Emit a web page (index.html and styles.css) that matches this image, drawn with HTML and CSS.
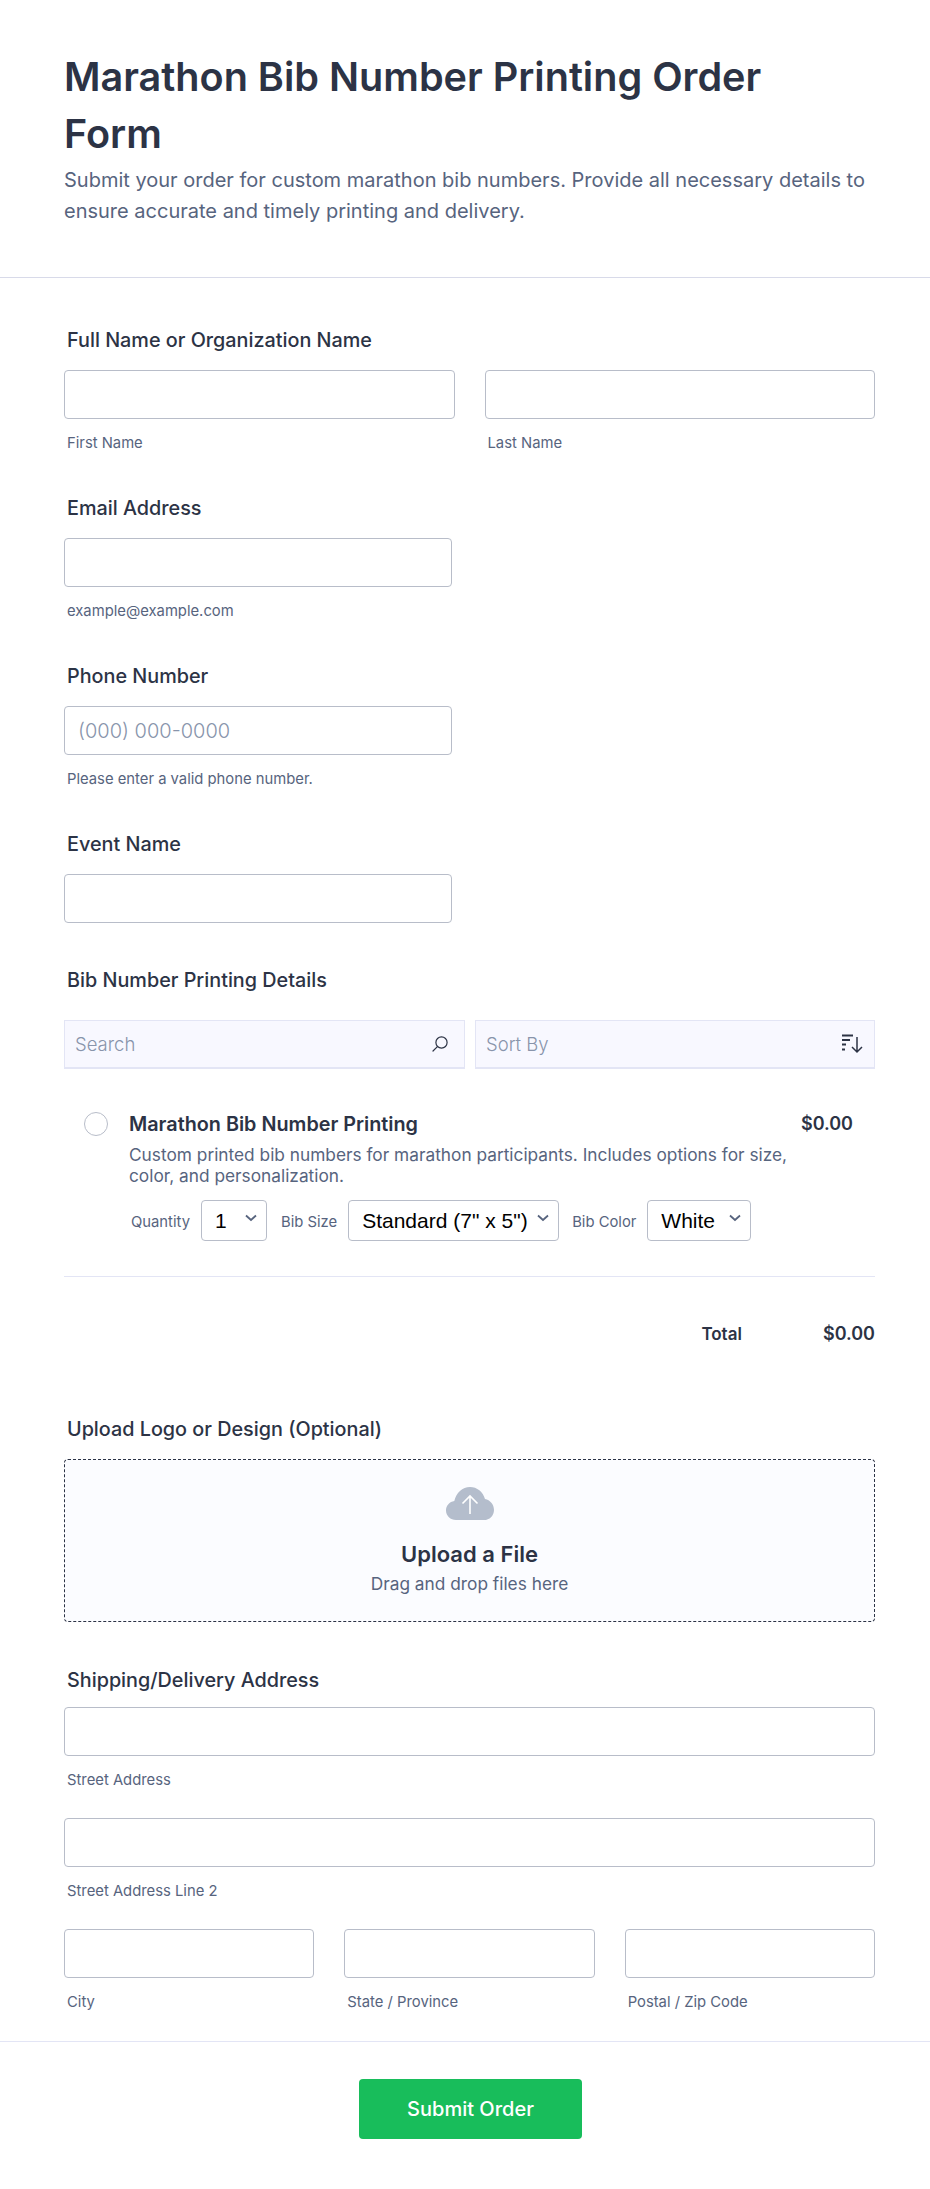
FILE: index.html
```html
<!DOCTYPE html>
<html>
<head>
	<meta charset="utf-8">
	<meta name="viewport" content="width=device-width, initial-scale=1.0">
	<title>Marathon Bib Number Printing Order Form</title>
	<link rel="stylesheet" href="styles.css">
</head>
<body>
	<header class="form-header">
		<h1>Marathon Bib Number Printing Order Form</h1>
		<p>Submit your order for custom marathon bib numbers. Provide all necessary details to ensure accurate and timely printing and delivery.</p>
	</header>

	<form class="form-body">
		<div class="field first">
			<label class="field-label">Full Name or Organization Name</label>
			<div class="cols cols-2">
				<div>
					<input type="text" class="text-input">
					<span class="sublabel">First Name</span>
				</div>
				<div>
					<input type="text" class="text-input">
					<span class="sublabel">Last Name</span>
				</div>
			</div>
		</div>

		<div class="field">
			<label class="field-label">Email Address</label>
			<input type="text" class="text-input half">
			<span class="sublabel">example@example.com</span>
		</div>

		<div class="field">
			<label class="field-label">Phone Number</label>
			<input type="text" class="text-input half" placeholder="(000) 000-0000">
			<span class="sublabel">Please enter a valid phone number.</span>
		</div>

		<div class="field">
			<label class="field-label">Event Name</label>
			<input type="text" class="text-input half">
		</div>

		<div class="field products">
			<label class="field-label">Bib Number Printing Details</label>
			<div class="product-tools">
				<div class="tool search-tool">
					<span>Search</span>
					<svg width="20" height="20" viewBox="0 0 20 20" fill="none" stroke="#2c3345" stroke-width="1.2">
						<circle cx="11.5" cy="8.5" r="5.6"/>
						<path d="M7.4 12.6 3 17" stroke-linecap="round"/>
					</svg>
				</div>
				<div class="tool">
					<span>Sort By</span>
					<svg width="22" height="20" viewBox="0 0 22 20" fill="none" stroke="#2c3345" stroke-width="2">
						<path d="M1 1.500h11M1 6h8M1 10.500h4M1 15.500h3"/>
						<path d="M16 3v15M11 13l5 5 5-5" stroke-width="1.500"/>
					</svg>
				</div>
			</div>

			<div class="product">
				<span class="radio"></span>
				<div class="product-name">Marathon Bib Number Printing</div>
				<div class="product-price">$0.00</div>
				<div class="product-desc">Custom printed bib numbers for marathon participants. Includes options for size, color, and personalization.</div>
				<div class="product-options">
					<span class="opt-label">Quantity</span>
					<div class="select-box qty">
						<select><option>1</option></select>
						<svg class="chevron" width="12" height="8" viewBox="0 0 12 8" fill="none" stroke="#57647e" stroke-width="1.8"><path d="M1 1.500l5 4.500 5-4.500"/></svg>
					</div>
					<span class="opt-label">Bib Size</span>
					<div class="select-box size">
						<select><option>Standard (7" x 5")</option></select>
						<svg class="chevron" width="12" height="8" viewBox="0 0 12 8" fill="none" stroke="#57647e" stroke-width="1.8"><path d="M1 1.500l5 4.500 5-4.500"/></svg>
					</div>
					<span class="opt-label">Bib Color</span>
					<div class="select-box color">
						<select><option>White</option></select>
						<svg class="chevron" width="12" height="8" viewBox="0 0 12 8" fill="none" stroke="#57647e" stroke-width="1.8"><path d="M1 1.500l5 4.500 5-4.500"/></svg>
					</div>
				</div>
			</div>

			<div class="total-row">
				<span class="total-label">Total</span>
				<span class="total-value">$0.00</span>
			</div>
		</div>

		<div class="field upload-field">
			<label class="field-label">Upload Logo or Design (Optional)</label>
			<div class="upload-box">
				<svg width="48" height="33" viewBox="0 0 48 33">
					<path fill="#b4bdcc" d="M10 33C4.500 33 0 28.800 0 23.500 0 18.700 3.600 14.700 8.300 14.100 10 6 16.500 0 24 0c7 0 13 4.900 15 11.900 5 .8 9 5.500 9 11 0 5.600-4.500 10.100-10 10.100Z"/>
					<path fill="none" stroke="#fff" stroke-width="1.600" d="M24 27V9M16.500 16.500 24 9l7.500 7.500"/>
				</svg>
				<div class="upload-title">Upload a File</div>
				<div class="upload-sub">Drag and drop files here</div>
			</div>
		</div>

		<div class="field address">
			<label class="field-label">Shipping/Delivery Address</label>
			<input type="text" class="text-input">
			<span class="sublabel">Street Address</span>
			<input type="text" class="text-input addr-line">
			<span class="sublabel">Street Address Line 2</span>
			<div class="cols cols-3">
				<div>
					<input type="text" class="text-input">
					<span class="sublabel">City</span>
				</div>
				<div>
					<input type="text" class="text-input">
					<span class="sublabel">State / Province</span>
				</div>
				<div>
					<input type="text" class="text-input">
					<span class="sublabel">Postal / Zip Code</span>
				</div>
			</div>
		</div>
	</form>

	<footer class="form-footer">
		<button type="button" class="submit-btn">Submit Order</button>
	</footer>
</body>
</html>
```

FILE: styles.css
```css
* {
	padding: 0;
	margin: 0;
	box-sizing: border-box;
}
body {
	background: #fff;
	font-family: Inter, "Liberation Sans", sans-serif;
	color: #2c3345;
}
.form-header {
	padding: 49px 55px 50px 64px;
	border-bottom: 1px solid #d8dae9;
}
.form-header h1 {
	max-width: 790px;
	font-size: 39.6px;
	line-height: 57px;
	font-weight: 600;
}
.form-header p {
	font-size: 20px;
	line-height: 31px;
	color: #57647e;
	margin-top: 2px;
}
.form-body {
	padding: 0 55px 0 64px;
}
.field {
	padding-top: 43px;
}
.field.first {
	padding-top: 50px;
}
.field-label {
	display: block;
	font-size: 19.8px;
	line-height: 24px;
	font-weight: 500;
	padding-left: 3px;
	margin-bottom: 18px;
}
.sublabel {
	display: block;
	font-size: 14.8px;
	line-height: 20px;
	color: #57647e;
	padding-left: 3px;
	margin-top: 14px;
}
.text-input {
	display: block;
	width: 100%;
	height: 49px;
	padding: 0 13px;
	font-family: inherit;
	font-size: 20px;
	font-weight: 300;
	border: 1px solid #b8bdc9;
	border-radius: 4px;
	background: #fff;
}
.text-input::placeholder {
	color: #8894ab;
}
.text-input.half {
	width: 388px;
}
.cols {
	display: grid;
}
.cols-2 {
	grid-template-columns: 1fr 1fr;
	gap: 30px;
}
.cols-3 {
	grid-template-columns: 1fr 1fr 1fr;
	gap: 30px;
	margin-top: 28px;
}
.addr-line {
	margin-top: 28px;
}
.products {
	padding-top: 45px;
}
.products .field-label {
	margin-bottom: 28px;
}
.product-tools {
	display: grid;
	grid-template-columns: 401px 400px;
	gap: 10px;
}
.tool {
	height: 49px;
	display: flex;
	align-items: center;
	justify-content: space-between;
	padding: 0 11px 0 10px;
	background: #f8f8ff;
	border: 1px solid #e3e5f5;
	border-bottom-width: 2px;
	font-size: 18.5px;
	font-weight: 300;
	color: #8894ab;
}
.search-tool {
	padding-right: 14px;
}
.product {
	display: grid;
	grid-template-columns: 24px 1fr auto;
	column-gap: 21px;
	padding: 43px 22px 35px 20px;
	border-bottom: 1px solid #e3e5f5;
}
.radio {
	width: 24px;
	height: 24px;
	border-radius: 50%;
	border: 1px solid #b8bdc9;
}
.product-name {
	font-size: 19.8px;
	line-height: 24px;
	font-weight: 600;
}
.product-price {
	font-size: 18px;
	line-height: 24px;
	font-weight: 600;
}
.product-desc {
	grid-column: 2 / 4;
	max-width: 680px;
	font-size: 17.3px;
	line-height: 21px;
	color: #57647e;
	margin-top: 8px;
}
.product-options {
	grid-column: 2 / 4;
	display: flex;
	align-items: center;
	margin-top: 14px;
	padding-left: 2px;
}
.opt-label {
	font-size: 14.8px;
	color: #57647e;
	margin-right: 11px;
	padding-top: 3px;
}
.select-box {
	position: relative;
	height: 41px;
	margin-right: 13px;
}
.select-box select {
	appearance: none;
	width: 100%;
	height: 100%;
	font-family: "Liberation Sans", sans-serif;
	font-size: 21px;
	color: #000;
	background: #fff;
	border: 1px solid #b8bdc9;
	border-radius: 4px;
	padding-left: 13px;
}
.chevron {
	position: absolute;
	top: 14px;
	right: 10px;
	pointer-events: none;
}
.qty {
	width: 66px;
	margin-right: 14px;
}
.size {
	width: 211px;
}
.color {
	width: 104px;
}
.total-row {
	display: flex;
	justify-content: flex-end;
	align-items: center;
	padding-top: 45px;
	font-weight: 600;
}
.total-label {
	font-size: 17px;
	line-height: 24px;
	margin-right: 81px;
}
.total-value {
	font-size: 18px;
	line-height: 24px;
}
.upload-field {
	padding-top: 71px;
}
.upload-box {
	height: 163px;
	display: flex;
	flex-direction: column;
	align-items: center;
	padding-top: 27px;
	background: #fbfcff;
	border: 1px dashed #2c3345;
	border-radius: 4px;
}
.upload-title {
	font-size: 22px;
	line-height: 30px;
	font-weight: 600;
	margin-top: 19px;
}
.upload-sub {
	font-size: 17.3px;
	line-height: 24px;
	color: #57647e;
	margin-top: 3px;
}
.address {
	padding-top: 46px;
}
.address .field-label {
	margin-bottom: 15px;
}
.form-footer {
	margin-top: 29px;
	padding: 37px 0 50px 11px;
	border-top: 1px solid #e3e5f5;
	display: flex;
	justify-content: center;
}
.submit-btn {
	width: 223px;
	height: 60px;
	font-family: inherit;
	font-size: 20px;
	font-weight: 500;
	color: #fff;
	background: #18bd5b;
	border: none;
	border-radius: 4px;
}
```
